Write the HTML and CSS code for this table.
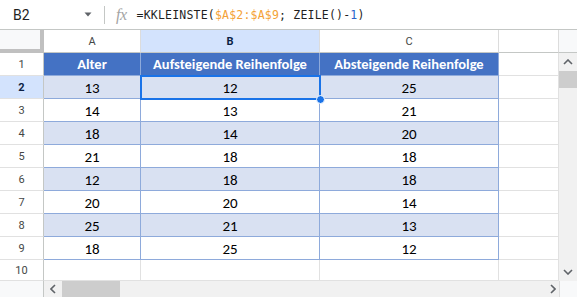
FILE: index.html
```html
<!DOCTYPE html>
<html lang="de">
<head>
<meta charset="utf-8">
<title>KKLEINSTE</title>
<link rel="stylesheet" href="styles.css">
</head>
<body>
<div class="app">
  <div class="formula-bar">
    <div class="namebox">
      <span class="cellref">B2</span>
      <svg class="caret" width="8" height="5" viewBox="0 0 8 5"><path d="M0.5 0.5 L7.5 0.5 L4 4.5 Z" fill="#5f6368"/></svg>
    </div>
    <div class="sep"></div>
    <span class="fx">fx</span>
    <span class="formula">=KKLEINSTE(<span class="ref">$A$2:$A$9</span>; ZEILE()-<span class="num">1</span>)</span>
  </div>

  <div class="sheet">
    <div class="corner"></div>
    <div class="ch">A</div>
    <div class="ch sel">B</div>
    <div class="ch">C</div>
    <div class="ch"></div>
    <div class="ch-end"></div>

    <div class="rh">1</div>
    <div class="th">Alter</div>
    <div class="th">Aufsteigende Reihenfolge</div>
    <div class="th">Absteigende Reihenfolge</div>
    <div class="gc"></div>

    <div class="vscroll">
      <svg class="arrow-up" width="10" height="6" viewBox="0 0 10 6"><path d="M1 5 L5 1 L9 5" fill="none" stroke="#5f6368" stroke-width="1.6"/></svg>
      <div class="vthumb"></div>
      <div class="vspace"></div>
      <svg class="arrow-down" width="10" height="6" viewBox="0 0 10 6"><path d="M1 1 L5 5 L9 1" fill="none" stroke="#5f6368" stroke-width="1.6"/></svg>
    </div>

    <div class="rh sel">2</div>
    <div class="td band">13</div>
    <div class="td band active">12<span class="selbox"></span><span class="handle"></span></div>
    <div class="td band">25</div>
    <div class="gc"></div>

    <div class="rh">3</div>
    <div class="td">14</div>
    <div class="td">13</div>
    <div class="td">21</div>
    <div class="gc"></div>

    <div class="rh">4</div>
    <div class="td band">18</div>
    <div class="td band">14</div>
    <div class="td band">20</div>
    <div class="gc"></div>

    <div class="rh">5</div>
    <div class="td">21</div>
    <div class="td">18</div>
    <div class="td">18</div>
    <div class="gc"></div>

    <div class="rh">6</div>
    <div class="td band">12</div>
    <div class="td band">18</div>
    <div class="td band">18</div>
    <div class="gc"></div>

    <div class="rh">7</div>
    <div class="td">20</div>
    <div class="td">20</div>
    <div class="td">14</div>
    <div class="gc"></div>

    <div class="rh">8</div>
    <div class="td band">25</div>
    <div class="td band">21</div>
    <div class="td band">13</div>
    <div class="gc"></div>

    <div class="rh">9</div>
    <div class="td">18</div>
    <div class="td">25</div>
    <div class="td">12</div>
    <div class="gc"></div>

    <div class="rh">10</div>
    <div class="gc"></div>
    <div class="gc"></div>
    <div class="gc"></div>
    <div class="gc"></div>

    <div class="hs-left"></div>
    <div class="hscroll">
      <svg class="arrow-left" width="6" height="10" viewBox="0 0 6 10"><path d="M5 1 L1 5 L5 9" fill="none" stroke="#5f6368" stroke-width="1.6"/></svg>
      <div class="hthumb"></div>
      <div class="hspace"></div>
      <svg class="arrow-right" width="6" height="10" viewBox="0 0 6 10"><path d="M1 1 L5 5 L1 9" fill="none" stroke="#5f6368" stroke-width="1.6"/></svg>
    </div>
    <div class="hs-corner"></div>
  </div>
</div>
</body>
</html>
```
FILE: styles.css
```css
* { box-sizing: border-box; }
html, body { margin: 0; padding: 0; background: #ffffff; }
body { width: 577px; height: 299px; overflow: hidden; font-family: Roboto, "Liberation Sans", sans-serif; }

.formula-bar {
  height: 30px;
  display: flex;
  align-items: center;
  border-bottom: 1px solid #c4c7c5;
}
.namebox {
  width: 104px;
  display: flex;
  align-items: center;
  padding-left: 13px;
  padding-right: 12px;
}
.cellref { font-size: 14px; color: #1f1f1f; }
.caret { margin-left: auto; display: block; }
.sep { width: 1px; height: 18px; background: #c4c7c5; }
.fx {
  margin-left: 11px;
  font-family: "Liberation Serif", serif;
  font-style: italic;
  font-size: 16px;
  color: #a4a4a4;
  letter-spacing: -0.5px;
}
.formula {
  margin-left: 10px;
  font-family: "DejaVu Sans Mono", "Liberation Mono", monospace;
  font-size: 11.5px;
  letter-spacing: 0.2px;
  color: #1f1f1f;
  white-space: pre;
}
.formula .ref { color: #f4a236; }
.formula .num { color: #2a62c9; }

.sheet {
  display: grid;
  grid-template-columns: 44px 97px 179px 179px 60px 18px;
  grid-template-rows: repeat(10, 23px) 21px 16px;
}
.sheet > div { display: flex; align-items: center; justify-content: center; }

.corner {
  background: #f8f9fa;
  border-right: 4px solid #c0c0c0;
  border-bottom: 4px solid #c0c0c0;
}
.ch {
  font-size: 11px;
  color: #444746;
  background: #ffffff;
  border-right: 1px solid #dcdcdc;
  border-bottom: 1px solid #c4c7c5;
}
.ch.sel { background: #d3e3fd; color: #0b1f44; font-weight: 700; }
.ch-end { background: #f8f9fa; border-bottom: 1px solid #c4c7c5; }

.rh {
  font-size: 11px;
  color: #444746;
  background: #ffffff;
  border-right: 1px solid #c4c7c5;
  border-bottom: 1px solid #e1e1e1;
}
.rh.sel { background: #d3e3fd; color: #0b1f44; font-weight: 700; }

.th, .td {
  font-family: Carlito, Lato, "Liberation Sans", sans-serif;
  border-right: 1px solid #8eaadb;
  border-bottom: 1px solid #8eaadb;
}
.th { background: #4472c4; color: #ffffff; font-weight: 700; font-size: 14.5px; }
.td { background: #ffffff; color: #000000; font-size: 15px; padding-top: 1px; }
.td.band { background: #d9e1f2; }
.td.active { position: relative; }
.selbox {
  position: absolute;
  left: -1px; top: -1px; right: -2px; bottom: -2px;
  border: 2px solid #1a73e8;
}
.handle {
  position: absolute;
  right: -6px; bottom: -6px;
  width: 9px; height: 9px;
  border-radius: 50%;
  background: #1a73e8;
  border: 1px solid #ffffff;
  z-index: 2;
}

.gc {
  background: #ffffff;
  border-right: 1px solid #e1e1e1;
  border-bottom: 1px solid #e1e1e1;
}

.sheet > .vscroll {
  grid-column: 6;
  grid-row: 2 / 12;
  background: #f1f1f1;
  flex-direction: column;
  justify-content: flex-start;
}
.arrow-up { margin-top: 6px; display: block; }
.vthumb { width: 18px; height: 17px; background: #cdcdcd; margin-top: 6px; }
.vspace { flex: 1; }
.arrow-down { margin-bottom: 6px; display: block; }

.hs-left { background: #f8f9fa; border-right: 1px solid #c4c7c5; }
.sheet > .hscroll {
  grid-column: 2 / 6;
  background: #f1f1f1;
  justify-content: flex-start;
}
.arrow-left { margin-left: 6px; display: block; }
.hthumb { width: 58px; height: 16px; background: #cdcdcd; margin-left: 6px; }
.hspace { flex: 1; }
.arrow-right { margin-right: 3px; display: block; }
.hs-corner { background: #f8f9fa; border-left: 1px solid #dcdcdc; }
```
